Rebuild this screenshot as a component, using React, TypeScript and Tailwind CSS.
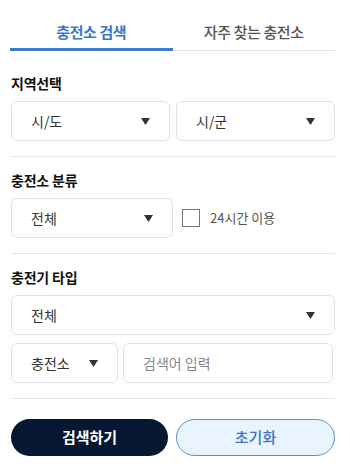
import { useState } from 'react'

const font = { fontFamily: '"Noto Sans CJK KR", "Noto Sans", sans-serif' }

function Arrow() {
  return (
    <svg width="9" height="7" viewBox="0 0 9 7" className="shrink-0">
      <path d="M0 0 H9 L4.5 7 Z" fill="#333" />
    </svg>
  )
}

function Select({ label, className = '' }: { label: string; className?: string }) {
  return (
    <div className={`flex h-[40px] items-center justify-between rounded-[6px] border border-[#e2e2e2] bg-white pl-[19px] pr-[19px] text-[14px] text-[#333] ${className}`}>
      <span>{label}</span>
      <Arrow />
    </div>
  )
}

function Section({ title, first, children }: { title: string; first?: boolean; children: React.ReactNode }) {
  return (
    <div className={`border-b border-[#e6e6e6] pb-[15px] ${first ? 'pt-[22px]' : 'pt-[13px]'}`}>
      <div className="mb-2 h-5 text-[14px] leading-5 font-bold tracking-[-0.2px] text-[#111]">{title}</div>
      {children}
    </div>
  )
}

export default function App() {
  const [tab, setTab] = useState(0)
  const [allDay, setAllDay] = useState(false)

  return (
    <div className="h-[468px] w-[350px] bg-white pl-[11px] pr-[15px]" style={font}>
      <div className="-ml-px flex border-b border-[#e4e4e4] pt-[17px]">
        {['충전소 검색', '자주 찾는 충전소'].map((t, i) => (
          <button
            key={t}
            type="button"
            onClick={() => setTab(i)}
            className={`-mb-px h-[34px] flex-1 border-b-[3px] text-[15px] tracking-[-0.4px] ${
              tab === i ? 'border-[#3a7bd5] font-bold text-[#3a78c6]' : 'border-transparent font-medium text-[#555]'
            }`}
          >
            {t}
          </button>
        ))}
      </div>

      <Section title="지역선택" first>
        <div className="flex gap-[6px]">
          <Select label="시/도" className="flex-1" />
          <Select label="시/군" className="flex-1" />
        </div>
      </Section>

      <Section title="충전소 분류">
        <div className="flex items-center">
          <Select label="전체" className="w-1/2" />
          <label className="ml-[9px] flex cursor-pointer items-center gap-[10px]">
            <input type="checkbox" checked={allDay} onChange={(e) => setAllDay(e.target.checked)} className="peer sr-only" />
            <span className="h-[18px] w-[18px] border border-[#777] bg-white peer-checked:bg-[#3a7bd5]" />
            <span className="text-[13px] text-[#555]">24시간 이용</span>
          </label>
        </div>
      </Section>

      <Section title="충전기 타입">
        <Select label="전체" />
        <div className="mt-2 flex gap-[5px]">
          <Select label="충전소" className="w-[107px]" />
          <input
            placeholder="검색어 입력"
            className="h-[40px] w-[210px] rounded-[6px] border border-[#e2e2e2] px-[19px] text-[14px] text-[#333] outline-none placeholder:text-[#888]"
          />
        </div>
      </Section>

      <div className="flex gap-[8px] pt-[20px]">
        <button type="button" className="h-[37px] flex-1 rounded-full bg-[#061731] text-[15px] font-bold text-white">
          검색하기
        </button>
        <button type="button" className="h-[37px] flex-1 rounded-full border border-[#5a8fd2] bg-[#eaf4fe] text-[15px] font-medium text-[#3a75c4]">
          초기화
        </button>
      </div>
    </div>
  )
}
